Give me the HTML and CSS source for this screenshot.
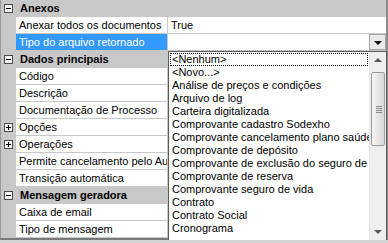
FILE: index.html
```html
<!DOCTYPE html>
<html lang="pt">
<head>
    <meta charset="UTF-8">
    <title>Propriedades</title>
    <link rel="stylesheet" href="styles.css">
</head>
<body>
    <div class="grid">
        <div class="row cat">
            <span class="margin"><i class="box minus"></i></span>
            <span class="label">Anexos</span>
        </div>
        <div class="row">
            <span class="margin"></span>
            <span class="name">Anexar todos os documentos</span>
            <span class="value">True</span>
        </div>
        <div class="row">
            <span class="margin"></span>
            <span class="name selected">Tipo do arquivo retornado</span>
            <span class="value"><span class="dropbtn"><i class="tri"></i></span></span>
        </div>
        <div class="row cat">
            <span class="margin"><i class="box minus"></i></span>
            <span class="label">Dados principais</span>
        </div>
        <div class="row">
            <span class="margin"></span>
            <span class="name">Código</span>
            <span class="value"></span>
        </div>
        <div class="row">
            <span class="margin"></span>
            <span class="name">Descrição</span>
            <span class="value"></span>
        </div>
        <div class="row">
            <span class="margin"></span>
            <span class="name">Documentação de Processo</span>
            <span class="value"></span>
        </div>
        <div class="row">
            <span class="margin"><i class="box plus"></i></span>
            <span class="name">Opções</span>
            <span class="value"></span>
        </div>
        <div class="row">
            <span class="margin"><i class="box plus"></i></span>
            <span class="name">Operações</span>
            <span class="value"></span>
        </div>
        <div class="row">
            <span class="margin"></span>
            <span class="name">Permite cancelamento pelo Autor</span>
            <span class="value"></span>
        </div>
        <div class="row">
            <span class="margin"></span>
            <span class="name">Transição automática</span>
            <span class="value"></span>
        </div>
        <div class="row cat">
            <span class="margin"><i class="box minus"></i></span>
            <span class="label">Mensagem geradora</span>
        </div>
        <div class="row">
            <span class="margin"></span>
            <span class="name">Caixa de email</span>
            <span class="value"></span>
        </div>
        <div class="row">
            <span class="margin"></span>
            <span class="name">Tipo de mensagem</span>
            <span class="value"></span>
        </div>

        <!-- lista aberta do combo -->
        <div class="droplist">
            <ul class="items">
                <li class="focus">&lt;Nenhum&gt;</li>
                <li>&lt;Novo...&gt;</li>
                <li>Análise de preços e condições</li>
                <li>Arquivo de log</li>
                <li>Carteira digitalizada</li>
                <li>Comprovante cadastro Sodexho</li>
                <li>Comprovante cancelamento plano saúde</li>
                <li>Comprovante de depósito</li>
                <li>Comprovante de exclusão do seguro de vida</li>
                <li>Comprovante de reserva</li>
                <li>Comprovante seguro de vida</li>
                <li>Contrato</li>
                <li>Contrato Social</li>
                <li>Cronograma</li>
            </ul>
            <div class="scrollbar">
                <span class="arrow up"></span>
                <span class="track">
                    <span class="thumb"><i class="grip"></i></span>
                </span>
                <span class="arrow down"></span>
            </div>
        </div>
    </div>
</body>
</html>
```

FILE: styles.css
```css
* {
    margin: 0;
    padding: 0;
    box-sizing: border-box;
}

body {
    background: #d4d4d4;
    font-family: "Liberation Sans", Arial, sans-serif;
    font-size: 11px;
    color: #000;
}

.grid {
    position: relative;
    width: 388px;
    background: #c8c8c8;
    border-left: 1px solid #9a9a9a;
    border-right: 2px solid #8c8c8c;
    border-bottom: 2px solid #7a7a7a;
}

.row {
    display: flex;
    height: 17px;
    border-bottom: 1px solid #c8c8c8;
}

.margin {
    flex: 0 0 15px;
    position: relative;
}

.name {
    flex: 0 0 152px;
    background: #fff;
    padding-left: 3px;
    line-height: 16px;
    white-space: nowrap;
    overflow: hidden;
    border-right: 1px solid #c8c8c8;
}

.name.selected {
    background: #3399ff;
    color: #fff;
}

.value {
    flex: 1;
    position: relative;
    background: #fff;
    padding-left: 3px;
    line-height: 16px;
}

.cat .label {
    font-weight: bold;
    padding-left: 4px;
    line-height: 16px;
}

/* caixinhas de + e - */
.box {
    position: absolute;
    left: 3px;
    top: 4px;
    width: 9px;
    height: 9px;
    border: 1px solid #4a4a4a;
    background: #f6f6f6;
}

.box::before,
.box.plus::after {
    content: "";
    position: absolute;
    background: #000;
}

.box::before {
    left: 1px;
    top: 3px;
    width: 5px;
    height: 1px;
}

.box.plus::after {
    left: 3px;
    top: 1px;
    width: 1px;
    height: 5px;
}

.dropbtn {
    position: absolute;
    right: 0;
    top: 0;
    width: 17px;
    height: 16px;
    border: 1px solid #a5a5a5;
    background: #e9e9e9;
}

.tri {
    position: absolute;
    left: 4px;
    top: 6px;
    border-left: 4px solid transparent;
    border-right: 4px solid transparent;
    border-top: 4px solid #000;
}

/* lista aberta */
.droplist {
    position: absolute;
    left: 167px;
    top: 51px;
    width: 219px;
    height: 190px;
    border: 1px solid #5a5a5a;
    background: #fff;
    display: flex;
}

.items {
    list-style: none;
    flex: 1;
    overflow: hidden;
    padding-top: 1px;
}

.items li {
    height: 13px;
    line-height: 13px;
    padding-left: 3px;
    white-space: nowrap;
}

.items li.focus {
    outline: 1px dotted #000;
    outline-offset: -1px;
    margin: 0 1px;
    padding-left: 2px;
}

.scrollbar {
    flex: 0 0 17px;
    display: flex;
    flex-direction: column;
    background: #efefef;
    border-left: 1px solid #e4e4e4;
}

.arrow {
    flex: 0 0 17px;
    position: relative;
}

.arrow::before {
    content: "";
    position: absolute;
    left: 4px;
    border-left: 4px solid transparent;
    border-right: 4px solid transparent;
}

.arrow.up::before {
    top: 6px;
    border-bottom: 4px solid #5a5a5a;
}

.arrow.down::before {
    top: 7px;
    border-top: 4px solid #5a5a5a;
}

.track {
    flex: 1;
    padding: 3px 1px;
}

.thumb {
    display: block;
    position: relative;
    height: 74px;
    border: 1px solid #9c9c9c;
    border-radius: 2px;
    background: linear-gradient(to right, #f4f4f4, #e4e4e4 60%, #d8d8d8);
}

.grip {
    position: absolute;
    left: 4px;
    top: 33px;
    width: 6px;
    height: 7px;
    background: repeating-linear-gradient(to bottom, #8a8a8a 0 1px, transparent 1px 2px);
}
```
